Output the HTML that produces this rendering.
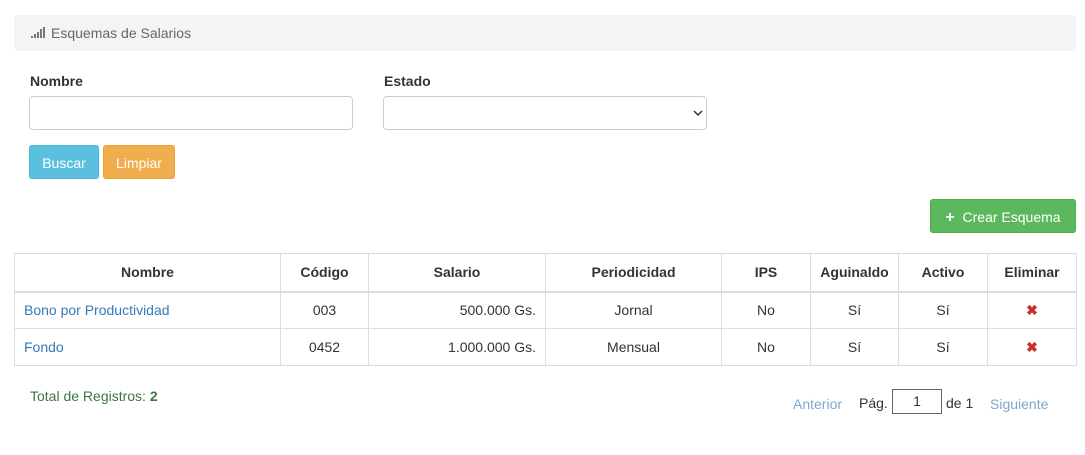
<!DOCTYPE html><html><head><style>
body{margin:0;width:1085px;height:455px;background:#fff;font-family:"Liberation Sans",sans-serif;font-size:14px;color:#333;position:relative;overflow:hidden}
.a{position:absolute}
.hdr{left:14px;top:15px;width:1062px;height:36px;background:#f4f4f4;border-radius:4px}
label{position:absolute;font-weight:bold;font-size:14px}
.in{position:absolute;height:34px;border:1px solid #ccc;border-radius:4px;box-sizing:border-box;background:#fff}
.btn{position:absolute;color:#fff;border-radius:3px;text-align:center;box-sizing:border-box;font-size:14px}
table{position:absolute;left:14px;top:253px;width:1062px;border-collapse:collapse;table-layout:fixed}
td,th{border:1px solid #ddd;height:37px;padding:0 9px;text-align:center;font-size:14px;box-sizing:border-box}
th{height:38px;border-bottom:2px solid #ddd}
a{color:#337ab7;text-decoration:none}
.x{color:#c9302c;font-weight:bold}
</style></head><body>
<div class="a hdr"></div>
<svg class="a" style="left:31px;top:27px" width="14" height="12"><rect x="0" y="9" width="2" height="2" fill="#777"/><rect x="3" y="7" width="2" height="4" fill="#777"/><rect x="6" y="5" width="2" height="6" fill="#777"/><rect x="9" y="2" width="2" height="9" fill="#777"/><rect x="12" y="0" width="2" height="11" fill="#777"/></svg>
<div class="a" style="left:51px;top:25px;color:#666">Esquemas de Salarios</div>
<label style="left:30px;top:73px">Nombre</label>
<label style="left:384px;top:73px">Estado</label>
<div class="in" style="left:29px;top:96px;width:324px"></div>
<div class="in" style="left:383px;top:96px;width:324px"></div>
<svg class="a" style="left:693px;top:110px" width="10" height="7"><path d="M1 1L5 5L9 1" stroke="#333" stroke-width="1.5" fill="none"/></svg>
<div class="btn" style="left:29px;top:145px;width:70px;height:34px;line-height:34px;background:#5bc0de;border:1px solid #46b8da">Buscar</div>
<div class="btn" style="left:103px;top:145px;width:72px;height:34px;line-height:34px;background:#f0ad4e;border:1px solid #eea236">Limpiar</div>
<div class="btn" style="left:930px;top:199px;width:146px;height:34px;line-height:34px;background:#5cb85c;border:1px solid #4cae4c"><b style="font-size:16px">+</b>&nbsp; Crear Esquema</div>
<table>
<colgroup><col style="width:266px"><col style="width:88px"><col style="width:177px"><col style="width:176px"><col style="width:89px"><col style="width:88px"><col style="width:89px"><col style="width:89px"></colgroup>
<tr><th>Nombre</th><th>Código</th><th>Salario</th><th>Periodicidad</th><th>IPS</th><th>Aguinaldo</th><th>Activo</th><th>Eliminar</th></tr>
<tr><td style="text-align:left"><a>Bono por Productividad</a></td><td>003</td><td style="text-align:right">500.000 Gs.</td><td>Jornal</td><td>No</td><td>Sí</td><td>Sí</td><td class="x">✖</td></tr>
<tr><td style="text-align:left"><a>Fondo</a></td><td>0452</td><td style="text-align:right">1.000.000 Gs.</td><td>Mensual</td><td>No</td><td>Sí</td><td>Sí</td><td class="x">✖</td></tr>
</table>
<div class="a" style="left:30px;top:388px;color:#3c763d">Total de Registros: <b>2</b></div>
<div class="a" style="left:793px;top:396px;color:#7ea6cf">Anterior</div>
<div class="a" style="left:859px;top:395px">Pág.</div>
<div class="a" style="left:892px;top:389px;width:50px;height:25px;border:1px solid #666;box-sizing:border-box;text-align:center;line-height:23px">1</div>
<div class="a" style="left:946px;top:395px">de 1</div>
<div class="a" style="left:990px;top:396px;color:#7ea6cf">Siguiente</div>
</body></html>
